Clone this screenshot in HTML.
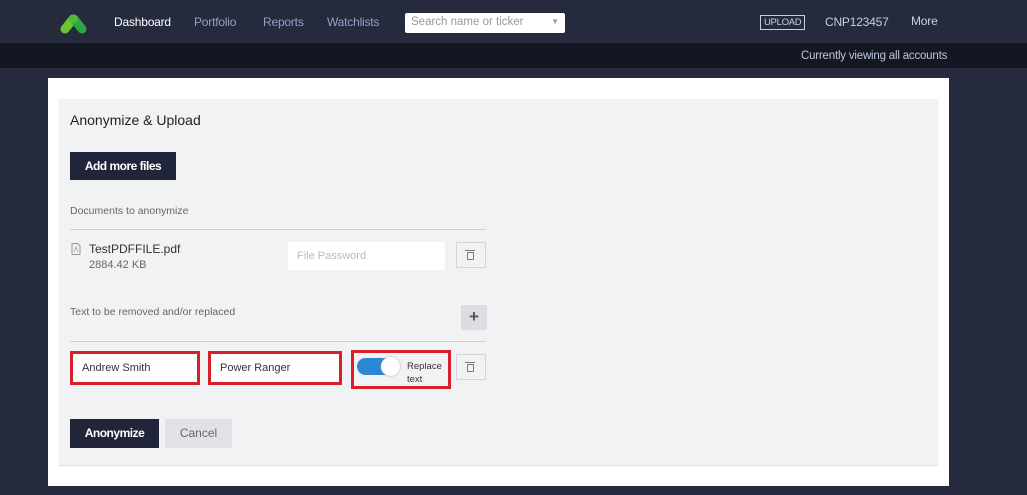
<!DOCTYPE html>
<html><head><meta charset="utf-8"><style>
*{box-sizing:border-box;margin:0;padding:0}
body{width:1027px;height:495px;overflow:hidden;background:#252a3d;font-family:"Liberation Sans",sans-serif;position:relative}
.a{position:absolute}
.nav{font-size:12px;color:#8fa3c8;top:15px;letter-spacing:-0.2px}
.wp{left:48px;top:78px;width:901px;height:408px;background:#fff}
.gp{left:59px;top:99px;width:879px;height:366px;background:#f1f2f4;box-shadow:0 1px 1px #ddd}
.lbl{font-size:10.5px;color:#666}
.inp{background:#fff;font-size:11px;color:#333;padding-left:9px;line-height:30px}
.red{border:3px solid #d81f2a}
.tb{width:30px;height:26px;border:1px solid #d3d4d7;background:#f1f2f4}
.tr{position:absolute;width:7px;height:8px;border:1.3px solid #777;border-radius:1px}
.tr:before{content:"";position:absolute;left:-3px;top:-3px;width:10px;height:1.3px;background:#777}
</style></head><body>
<svg class="a" style="left:59px;top:12px" width="30" height="23" viewBox="0 0 30 23"><path d="M6 17 L14 7" stroke="#6cc52c" stroke-width="9" stroke-linecap="round" fill="none"/><path d="M15 7 L23 17" stroke="#2ca645" stroke-width="9" stroke-linecap="round" fill="none"/><circle cx="14.5" cy="7" r="4.5" fill="#4fb83a"/></svg>
<div class="a nav" style="left:114px;color:#fff">Dashboard</div>
<div class="a nav" style="left:194px">Portfolio</div>
<div class="a nav" style="left:263px">Reports</div>
<div class="a nav" style="left:327px">Watchlists</div>
<div class="a" style="left:405px;top:13px;width:160px;height:20px;background:#fff;border-radius:2px;font-size:11.5px;color:#999;padding:3px 6px">Search name or ticker<span style="position:absolute;right:6px;top:4px;font-size:8px;color:#999">▼</span></div>
<div class="a" style="left:760px;top:15px;border:1px solid #c9cfdc;color:#c9cfdc;font-size:9.5px;padding:1px 3px;line-height:11px;letter-spacing:-0.3px">UPLOAD</div>
<div class="a nav" style="left:825px;color:#c9cfdc">CNP123457</div>
<div class="a nav" style="left:911px;top:14px;color:#c9cfdc">More</div>
<div class="a" style="left:0;top:43px;width:1027px;height:25px;background:#141721"></div>
<div class="a" style="left:801px;top:50px;font-size:11.5px;color:#b9c6df;letter-spacing:-0.2px">Currently viewing all accounts</div>
<div class="a wp"></div>
<div class="a gp"></div>
<div class="a" style="left:70px;top:112px;font-size:14px;color:#222">Anonymize &amp; Upload</div>
<div class="a" style="left:70px;top:152px;width:106px;height:28px;background:#20253a;color:#fff;font-size:12px;font-weight:bold;text-align:center;line-height:28px;letter-spacing:-0.5px">Add more files</div>
<div class="a lbl" style="left:70px;top:205px">Documents to anonymize</div>
<div class="a" style="left:70px;top:229px;width:416px;height:1px;background:#cfd0d3"></div>
<svg class="a" style="left:71px;top:243px" width="10" height="12" viewBox="0 0 10 12"><path d="M1 .5h5.5l2.5 2.5v8.5H1z" fill="none" stroke="#999"/><path d="M3 9 L5 4 L7 9" fill="none" stroke="#999" stroke-width=".7"/></svg>
<div class="a" style="left:89px;top:242px;font-size:12px;color:#333">TestPDFFILE.pdf</div>
<div class="a" style="left:89px;top:259px;font-size:11px;color:#666">2884.42 KB</div>
<div class="a inp" style="left:288px;top:242px;width:157px;height:28px;color:#bbb;line-height:28px">File Password</div>
<div class="a tb" style="left:456px;top:242px"></div>
<div class="tr" style="left:467px;top:252px"></div>
<div class="a lbl" style="left:70px;top:306px">Text to be removed and/or replaced</div>
<div class="a" style="left:461px;top:305px;width:26px;height:25px;background:#dcdde0;text-align:center;font-size:17px;font-weight:bold;color:#555;line-height:24px">+</div>
<div class="a" style="left:70px;top:341px;width:416px;height:1px;background:#cfd0d3"></div>
<div class="a inp red" style="left:70px;top:351px;width:130px;height:34px;line-height:28px">Andrew Smith</div>
<div class="a inp red" style="left:208px;top:351px;width:134px;height:34px;line-height:28px">Power Ranger</div>
<div class="a red" style="left:351px;top:350px;width:100px;height:39px;background:#f1f2f4"></div>
<div class="a" style="left:357px;top:358px;width:42px;height:17px;background:#2b86d4;border-radius:9px"></div>
<div class="a" style="left:381px;top:357px;width:19px;height:19px;background:#fff;border-radius:50%;box-shadow:0 0 2px #aaa"></div>
<div class="a" style="left:407px;top:360px;font-size:9.5px;color:#333;line-height:13px">Replace<br>text</div>
<div class="a tb" style="left:456px;top:354px"></div>
<div class="tr" style="left:467px;top:364px"></div>
<div class="a" style="left:70px;top:419px;width:89px;height:29px;background:#20253a;color:#fff;font-size:12px;font-weight:bold;text-align:center;line-height:29px;letter-spacing:-0.5px">Anonymize</div>
<div class="a" style="left:165px;top:419px;width:67px;height:29px;background:#e1e2e5;color:#666;font-size:12px;text-align:center;line-height:29px">Cancel</div>
</body></html>
